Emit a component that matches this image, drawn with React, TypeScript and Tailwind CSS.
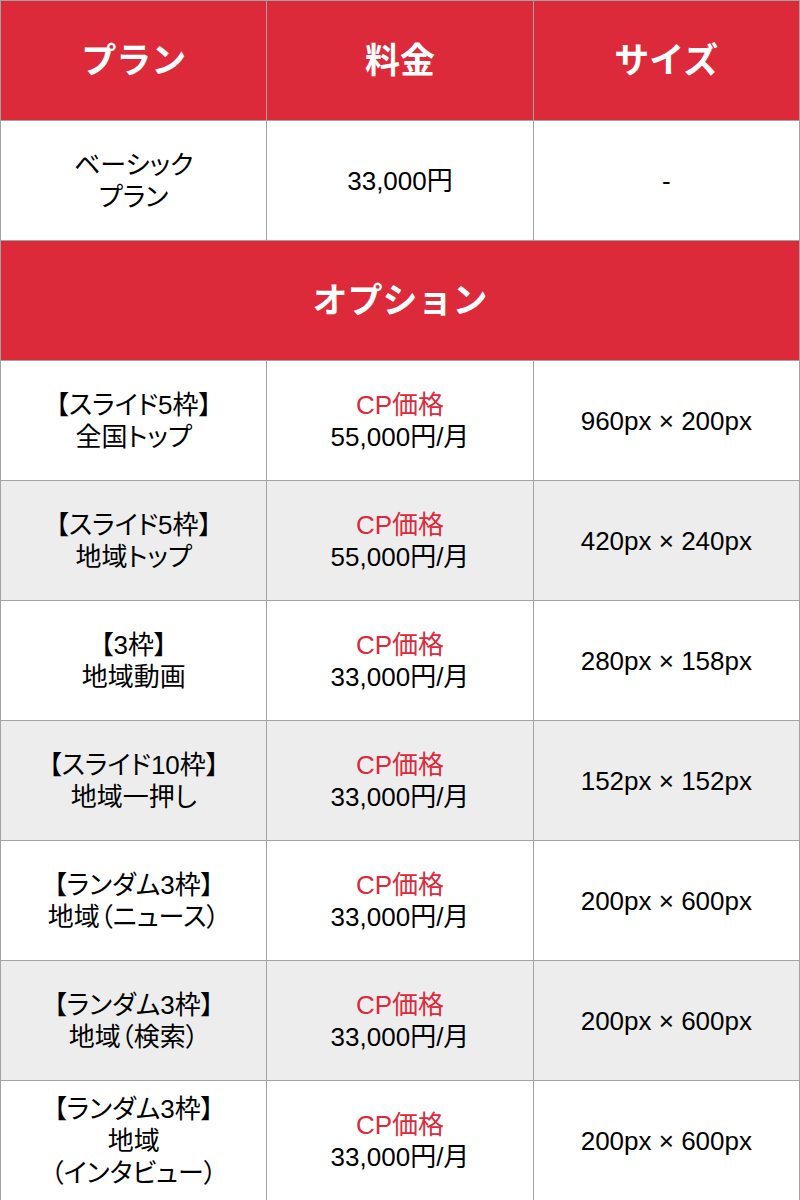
const FONT = "font-['Liberation_Sans','Noto_Sans_CJK_JP',sans-serif]";

interface OptionRow {
  name: string[];
  price: string;
  size: string;
}

const OPTIONS: OptionRow[] = [
  { name: ['【スライド5枠】', '全国トップ'], price: '55,000円/月', size: '960px × 200px' },
  { name: ['【スライド5枠】', '地域トップ'], price: '55,000円/月', size: '420px × 240px' },
  { name: ['【3枠】', '地域動画'], price: '33,000円/月', size: '280px × 158px' },
  { name: ['【スライド10枠】', '地域一押し'], price: '33,000円/月', size: '152px × 152px' },
  { name: ['【ランダム3枠】', '地域（ニュース）'], price: '33,000円/月', size: '200px × 600px' },
  { name: ['【ランダム3枠】', '地域（検索）'], price: '33,000円/月', size: '200px × 600px' },
  { name: ['【ランダム3枠】', '地域', '（インタビュー）'], price: '33,000円/月', size: '200px × 600px' },
];

const cell = 'h-[120px] border-r border-b border-[#a3a3a3] flex flex-col items-center justify-center text-center';
const body = "[font-feature-settings:'palt']";

export default function App() {
  return (
    <div className={`${FONT} w-[800px] bg-white text-[26px] leading-[32px] text-black`}>
      <div className="grid grid-cols-3 border-t border-l border-[#a3a3a3]">
        {['プラン', '料金', 'サイズ'].map(h => (
          <div key={h} className={`${cell} bg-[#dc2a3b] text-white text-[35px] font-bold`}>
            {h}
          </div>
        ))}

        <div className={`${cell} ${body}`}>
          <span>ベーシック</span>
          <span>プラン</span>
        </div>
        <div className={`${cell} ${body}`}>33,000円</div>
        <div className={`${cell} ${body}`}>-</div>

        <div className={`${cell} col-span-3 bg-[#dc2a3b] text-white text-[35px] font-bold`}>
          オプション
        </div>

        {OPTIONS.map((row, i) => {
          const bg = i % 2 === 1 ? 'bg-[#ededed]' : 'bg-white';
          return [
            <div key={`n${i}`} className={`${cell} ${body} ${bg}`}>
              {row.name.map(line => (
                <span key={line}>{line}</span>
              ))}
            </div>,
            <div key={`p${i}`} className={`${cell} ${body} ${bg}`}>
              <span className="text-[#dc2a3b]">CP価格</span>
              <span>{row.price}</span>
            </div>,
            <div key={`s${i}`} className={`${cell} ${body} ${bg}`}>{row.size}</div>,
          ];
        })}
      </div>
    </div>
  );
}
